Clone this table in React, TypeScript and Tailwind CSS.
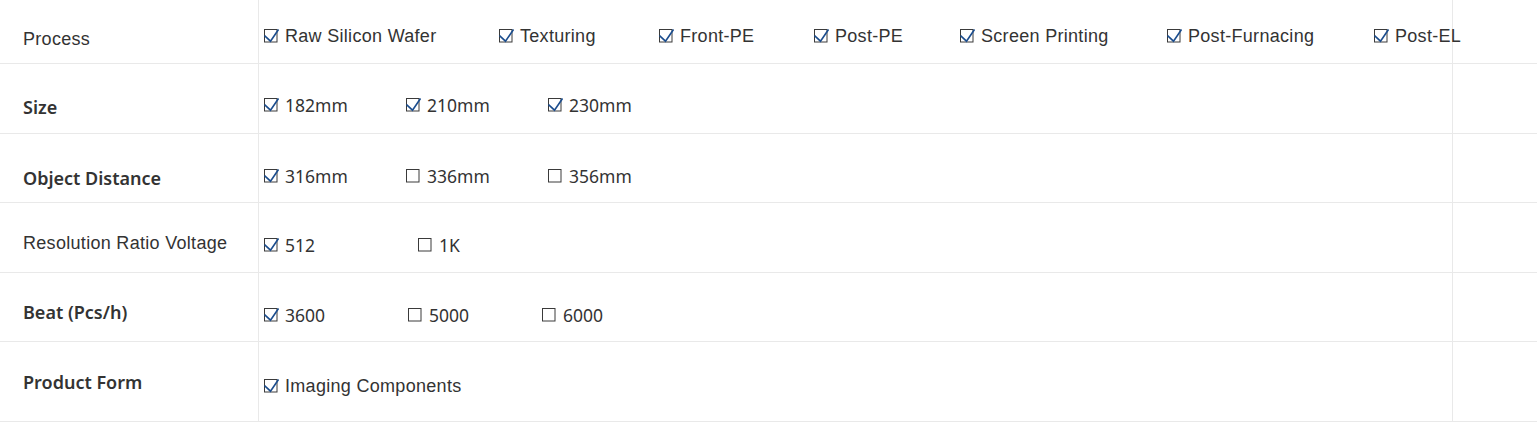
import React from 'react'

type Item = { text: string; checked: boolean; width: string }
type Row = {
  label: string
  labelClass: string
  valueClass: string
  rowClass: string
  items: Item[]
}

const ARIAL = "font-['Liberation_Sans',Arial,sans-serif] text-[18px] tracking-[0.3px]"
const SEGOE_BOLD = "font-['Noto_Sans',sans-serif] text-[18px] font-semibold"
const SEGOE = "font-['Noto_Sans',sans-serif] text-[17.5px]"

const ROWS: Row[] = [
  {
    label: 'Process',
    labelClass: `${ARIAL} pt-[27px]`,
    valueClass: `${ARIAL} pt-[24px]`,
    rowClass: 'h-[64px]',
    items: [
      { text: 'Raw Silicon Wafer', checked: true, width: 'w-[235px]' },
      { text: 'Texturing', checked: true, width: 'w-[160px]' },
      { text: 'Front-PE', checked: true, width: 'w-[155px]' },
      { text: 'Post-PE', checked: true, width: 'w-[146px]' },
      { text: 'Screen Printing', checked: true, width: 'w-[207px]' },
      { text: 'Post-Furnacing', checked: true, width: 'w-[207px]' },
      { text: 'Post-EL', checked: true, width: 'w-auto' },
    ],
  },
  {
    label: 'Size',
    labelClass: `${SEGOE_BOLD} pt-[31px]`,
    valueClass: `${SEGOE} pt-[29px]`,
    rowClass: 'h-[70px]',
    items: [
      { text: '182mm', checked: true, width: 'w-[142px]' },
      { text: '210mm', checked: true, width: 'w-[142px]' },
      { text: '230mm', checked: true, width: 'w-auto' },
    ],
  },
  {
    label: 'Object Distance',
    labelClass: `${SEGOE_BOLD} pt-[32px]`,
    valueClass: `${SEGOE} pt-[30px]`,
    rowClass: 'h-[69px]',
    items: [
      { text: '316mm', checked: true, width: 'w-[142px]' },
      { text: '336mm', checked: false, width: 'w-[142px]' },
      { text: '356mm', checked: false, width: 'w-auto' },
    ],
  },
  {
    label: 'Resolution Ratio Voltage',
    labelClass: `${ARIAL} pt-[28px]`,
    valueClass: `${SEGOE} pt-[30px]`,
    rowClass: 'h-[70px]',
    items: [
      { text: '512', checked: true, width: 'w-[154px]' },
      { text: '1K', checked: false, width: 'w-auto' },
    ],
  },
  {
    label: 'Beat (Pcs/h)',
    labelClass: `${SEGOE_BOLD} pt-[27px]`,
    valueClass: `${SEGOE} pt-[30px]`,
    rowClass: 'h-[69px]',
    items: [
      { text: '3600', checked: true, width: 'w-[144px]' },
      { text: '5000', checked: false, width: 'w-[134px]' },
      { text: '6000', checked: false, width: 'w-auto' },
    ],
  },
  {
    label: 'Product Form',
    labelClass: `${SEGOE_BOLD} pt-[28px]`,
    valueClass: `${ARIAL} pt-[32px]`,
    rowClass: 'h-[80px]',
    items: [{ text: 'Imaging Components', checked: true, width: 'w-auto' }],
  },
]

function Box({ checked }: { checked: boolean }) {
  return (
    <svg width="15" height="14" viewBox="0 0 15 14" className="shrink-0">
      <rect x="0.5" y="0.5" width="12.5" height="12.5" fill="none" stroke="#3a3a3a" strokeWidth="1" />
      {checked && (
        <polyline
          points="0.5,6.5 6.5,12.2 14.5,0.5"
          fill="none"
          stroke="#1b4d8e"
          strokeWidth="1.6"
        />
      )}
    </svg>
  )
}

export default function App() {
  return (
    <div className="w-[1537px] h-[422px] bg-white text-[#333] overflow-hidden">
      {ROWS.map(row => (
        <div key={row.label} className={`flex border-b border-[#e9e9e9] ${row.rowClass}`}>
          <div className={`w-[259px] shrink-0 border-r border-[#e9e9e9] pl-[23px] leading-[24px] ${row.labelClass}`}>
            {row.label}
          </div>
          <div className={`w-[1194px] shrink-0 border-r border-[#e9e9e9] pl-[5px] flex items-start leading-[24px] ${row.valueClass}`}>
            {row.items.map(it => (
              <div key={it.text} className={`flex items-center h-[24px] shrink-0 whitespace-nowrap ${it.width}`}>
                <Box checked={it.checked} />
                <span className="ml-[6px]">{it.text}</span>
              </div>
            ))}
          </div>
          <div className="flex-1" />
        </div>
      ))}
    </div>
  )
}
